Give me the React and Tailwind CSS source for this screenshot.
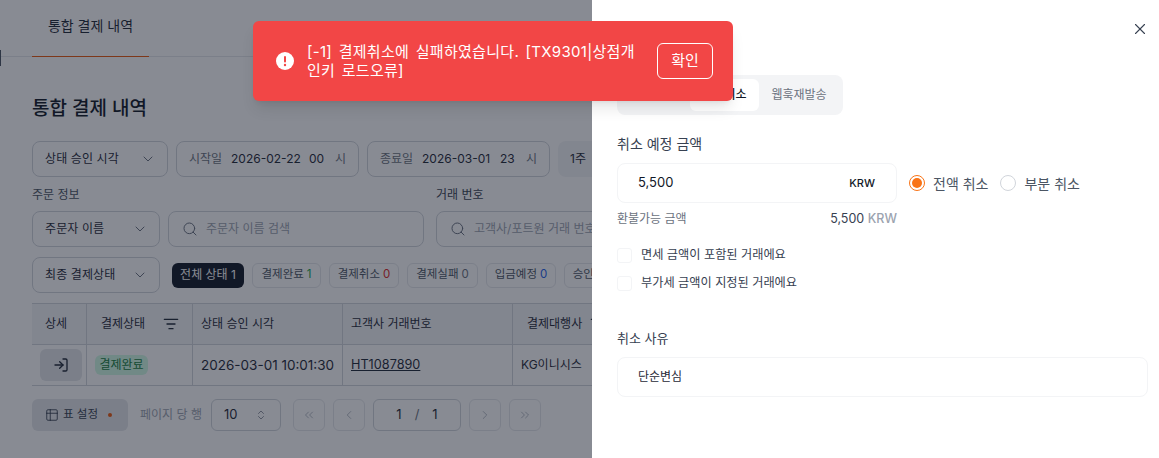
import { ChevronDown, ChevronLeft, ChevronRight, ChevronsLeft, ChevronsRight, ChevronsUpDown, ListFilter, LogIn, Search, Table2, X } from 'lucide-react';

const FONT = 'font-["Inter","Noto_Sans_CJK_KR",sans-serif]';

const SelectBox = ({ label, width }) => (
  <div className={`h-9 ${width} shrink-0 flex items-center justify-between pl-[12px] pr-[11px] border border-[#d1d5db] rounded-lg bg-white text-[12px] tracking-[0.1px] text-[#1f2937]`}>
    <span>{label}</span>
    <ChevronDown size={16} strokeWidth={1.5} className="text-[#6b7280]" />
  </div>
);

const DateBox = ({ label, date, hour, width }) => (
  <div className={`h-9 ${width} shrink-0 flex items-center pl-[12px] border border-[#d1d5db] rounded-lg bg-white text-[12px]`}>
    <span className="text-[#6b7280] w-[42px]">{label}</span>
    <span className="text-[#1f2937] w-[78px]">{date}</span>
    <span className="text-[#1f2937] w-[26px]">{hour}</span>
    <span className="text-[#6b7280]">시</span>
  </div>
);

const SearchBox = ({ placeholder, width }) => (
  <div className={`h-9 ${width} shrink-0 flex items-center gap-2 pl-[13px] border border-[#d1d5db] rounded-lg bg-white text-[12px] text-[#9ca3af] whitespace-nowrap overflow-hidden`}>
    <Search size={16} strokeWidth={1.5} className="text-[#6b7280] shrink-0" />
    <span>{placeholder}</span>
  </div>
);

const chips = [
  { label: '결제완료', count: 1, color: 'text-[#16a34a]', width: 'w-[69px]' },
  { label: '결제취소', count: 0, color: 'text-[#dc2626]', width: 'w-[70px]' },
  { label: '결제실패', count: 0, color: 'text-[#6b7280]', width: 'w-[71px]' },
  { label: '입금예정', count: 0, color: 'text-[#2563eb]', width: 'w-[70px]' },
  { label: '승인대기', count: 0, color: 'text-[#6b7280]', width: 'w-[70px]' },
];

const PageBtn = ({ children }) => (
  <div className="w-8 h-8 shrink-0 flex items-center justify-center border border-[#e5e7eb] rounded-md text-[#9ca3af]">
    {children}
  </div>
);

const Background = () => (
  <div className="w-[640px] h-full bg-white">
    <div className="h-[57px] border-b border-[#e5e7eb] pl-8">
      <div className="w-[117px] h-[57px] border-b border-[#ea580c] flex justify-center pt-[15px] text-[14px] text-[#1f2937]">
        통합 결제 내역
      </div>
    </div>

    <div className="pl-8 pt-[39px]">
      <h1 className="h-[26px] leading-[26px] text-[19px] font-medium text-[#111827]">통합 결제 내역</h1>

      <div className="flex mt-[19px]">
        <SelectBox label="상태 승인 시각" width="w-[136px]" />
        <div className="ml-2"><DateBox label="시작일" date="2026-02-22" hour="00" width="w-[183px]" /></div>
        <div className="ml-2"><DateBox label="종료일" date="2026-03-01" hour="23" width="w-[183px]" /></div>
        <div className="ml-2 w-[60px] h-9 shrink-0 flex items-center pl-3 rounded-lg bg-[#f3f4f6] text-[12px] text-[#1f2937]">1주</div>
      </div>

      <div className="flex mt-[10px] h-[16px] leading-[16px] text-[12px] text-[#4b5563]">
        <span className="w-[404px]">주문 정보</span>
        <span className="text-[#374151]">거래 번호</span>
      </div>

      <div className="flex gap-2 mt-[8px]">
        <SelectBox label="주문자 이름" width="w-[128px]" />
        <SearchBox placeholder="주문자 이름 검색" width="w-[256px]" />
        <div className="ml-1"><SearchBox placeholder="고객사/포트원 거래 번호" width="w-[256px]" /></div>
      </div>

      <div className="flex items-center mt-[10px]">
        <SelectBox label="최종 결제상태" width="w-[128px]" />
        <div className="ml-3 w-[72px] h-[25px] shrink-0 flex items-center justify-center rounded-md bg-[#111827] text-white text-[12px]">전체 상태 1</div>
        <div className="flex gap-2 ml-2">
          {chips.map(chip => (
            <div key={chip.label} className={`${chip.width} h-[25px] shrink-0 flex items-center justify-center gap-[3px] border border-[#e5e7eb] rounded-md text-[11.5px] text-[#4b5563] whitespace-nowrap`}>
              {chip.label} <span className={chip.color}>{chip.count}</span>
            </div>
          ))}
        </div>
      </div>

      <div className="mt-[10px] w-[608px] text-[12px] text-[#1f2937]">
        <div className="flex h-[42px] items-center bg-[#f3f4f6] border-y border-[#d1d5db]">
          <div className="w-[55px] h-full flex items-center pl-[13px] border-r border-[#d1d5db]">상세</div>
          <div className="w-[106px] h-full flex items-center justify-between pl-[14px] pr-[13px] border-r border-[#d1d5db]">
            결제상태
            <ListFilter size={16} strokeWidth={2} />
          </div>
          <div className="w-[150px] h-full flex items-center pl-[8px] border-r border-[#d1d5db]">상태 승인 시각</div>
          <div className="w-[170px] h-full flex items-center pl-[8px] border-r border-[#d1d5db]">고객사 거래번호</div>
          <div className="flex-1 h-full flex items-center gap-2 pl-[14px]">
            결제대행사
            <ListFilter size={16} strokeWidth={2} />
          </div>
        </div>
        <div className="flex h-[41px] items-center border-b border-[#d1d5db] text-[13px]">
          <div className="w-[55px] h-full flex items-center pl-2 border-r border-[#d1d5db]">
            <div className="w-[42px] h-8 flex items-center justify-center rounded-md bg-[#e5e7eb]">
              <LogIn size={16} strokeWidth={2} className="text-[#1f2937]" />
            </div>
          </div>
          <div className="w-[106px] h-full flex items-center pl-[8px] border-r border-[#d1d5db]">
            <span className="w-[53px] h-5 flex items-center justify-center rounded-md bg-[#d1fae5] text-[12px] text-[#15803d]">결제완료</span>
          </div>
          <div className="w-[150px] h-full flex items-center pl-[8px] border-r border-[#d1d5db] text-[13.5px]">2026-03-01 10:01:30</div>
          <div className="w-[170px] h-full flex items-center pl-[8px] border-r border-[#d1d5db] underline text-[12.7px]">HT1087890</div>
          <div className="flex-1 h-full flex items-center pl-[8px] text-[12px]">KG이니시스</div>
        </div>
      </div>

      <div className="flex items-center mt-[13px]">
        <div className="w-24 h-8 shrink-0 flex items-center pl-[13px] gap-1 rounded-md bg-[#e5e7eb] text-[11.5px] text-[#374151]">
          <Table2 size={14} strokeWidth={1.5} />
          표 설정
          <span className="w-1 h-1 ml-[6px] rounded-full bg-[#ea580c]" />
        </div>
        <span className="ml-3 w-[71px] shrink-0 text-[12px] text-[#9ca3af]">페이지 당 행</span>
        <div className="w-[70px] h-8 shrink-0 flex items-center justify-between pl-3 pr-[13px] border border-[#d1d5db] rounded-md text-[13px] text-[#1f2937]">
          10
          <ChevronsUpDown size={12} strokeWidth={1.5} className="text-[#6b7280]" />
        </div>
        <div className="flex gap-2 ml-3">
          <PageBtn><ChevronsLeft size={14} strokeWidth={1.25} /></PageBtn>
          <PageBtn><ChevronLeft size={14} strokeWidth={1.25} /></PageBtn>
          <div className="w-[88px] h-8 shrink-0 flex items-center justify-center gap-[13px] border border-[#d1d5db] rounded-md text-[13px] text-[#1f2937]">
            <span>1</span><span className="text-[#6b7280]">/</span><span>1</span>
          </div>
          <PageBtn><ChevronRight size={14} strokeWidth={1.25} /></PageBtn>
          <PageBtn><ChevronsRight size={14} strokeWidth={1.25} /></PageBtn>
        </div>
      </div>
    </div>
  </div>
);

const Panel = () => (
  <div className="absolute top-0 right-0 bottom-0 w-[567px] bg-white pl-[25px] pr-[11px]">
    <div className="absolute top-5 right-[10px] text-[#374151]">
      <X size={18} strokeWidth={1.5} />
    </div>

    <div className="mt-[75px] w-[226px] h-10 rounded-lg bg-[#f3f4f6] flex items-center px-1 text-[12px]">
      <div className="w-[69px] text-center text-[#6b7280]">결제내역</div>
      <div className="w-[69px] h-8 flex items-center justify-center rounded-md bg-white font-medium text-[#111827]">결제취소</div>
      <div className="w-[80px] text-center text-[#6b7280]">웹훅재발송</div>
    </div>

    <div className="mt-[20px] h-[18px] leading-[18px] text-[14px] text-[#374151]">취소 예정 금액</div>

    <div className="flex items-center mt-[10px]">
      <div className="w-[280px] h-10 shrink-0 flex items-center justify-between pl-5 pr-[21px] border border-[#f3f4f6] rounded-lg text-[13px] text-[#111827]">
        <span>5,500</span>
        <span className="text-[11px] font-medium">KRW</span>
      </div>
      <div className="ml-3 w-4 h-4 shrink-0 flex items-center justify-center rounded-full border border-[#f97316]">
        <span className="w-[10px] h-[10px] rounded-full bg-[#f97316]" />
      </div>
      <span className="ml-2 text-[14px] text-[#4b5563]">전액 취소</span>
      <div className="ml-3 w-4 h-4 shrink-0 rounded-full border border-[#d1d5db]" />
      <span className="ml-2 text-[14px] text-[#4b5563]">부분 취소</span>
    </div>

    <div className="w-[280px] mt-[8px] flex justify-between h-4 leading-4 text-[12px] text-[#6b7280]">
      <span>환불가능 금액</span>
      <span className="text-[12.5px] text-[#374151]">5,500 <span className="font-medium text-[#9ca3af]">KRW</span></span>
    </div>

    <div className="mt-[20px] flex flex-col gap-3 text-[12.2px] text-[#374151]">
      <div className="flex items-center gap-[9px] h-4">
        <div className="w-[15px] h-[15px] rounded-[3px] border border-[#f3f4f6]" />
        <span>면세 금액이 포함된 거래에요</span>
      </div>
      <div className="flex items-center gap-[9px] h-4">
        <div className="w-[15px] h-[15px] rounded-[3px] border border-[#f3f4f6]" />
        <span>부가세 금액이 지정된 거래에요</span>
      </div>
    </div>

    <div className="mt-[39px] h-4 leading-4 text-[13px] text-[#374151]">취소 사유</div>
    <div className="mt-[11px] w-[531px] h-10 flex items-center pl-5 border border-[#f3f4f6] rounded-lg text-[12px] text-[#1f2937]">단순변심</div>
  </div>
);

const Toast = () => (
  <div className="absolute top-[21px] left-[253px] w-[480px] h-20 flex items-center pl-[23px] pr-5 rounded-md bg-[#f24646] text-white shadow-lg">
    <svg width="18" height="18" viewBox="0 0 18 18" className="shrink-0">
      <circle cx="9" cy="9" r="9" fill="#ffffff" />
      <rect x="8" y="4" width="2" height="6.5" rx="1" fill="#f24646" />
      <circle cx="9" cy="13" r="1.2" fill="#f24646" />
    </svg>
    <p className="ml-[13px] w-[330px] text-[15px] leading-[19px] tracking-[0.3px] [word-spacing:2px]">[-1] 결제취소에 실패하였습니다. [TX9301|상점개인키 로드오류]</p>
    <div className="ml-auto w-14 h-9 shrink-0 flex items-center justify-center rounded-md border border-white text-[15px]">확인</div>
  </div>
);

const App = () => (
  <div className={`relative w-[1159px] h-[458px] overflow-hidden bg-white ${FONT}`}>
    <Background />
    <div className="absolute left-0 top-[50px] w-px h-4 bg-[#4b5563]" />
    <div className="absolute inset-0 bg-[#111827]/50" />
    <Panel />
    <Toast />
  </div>
);

export default App;
